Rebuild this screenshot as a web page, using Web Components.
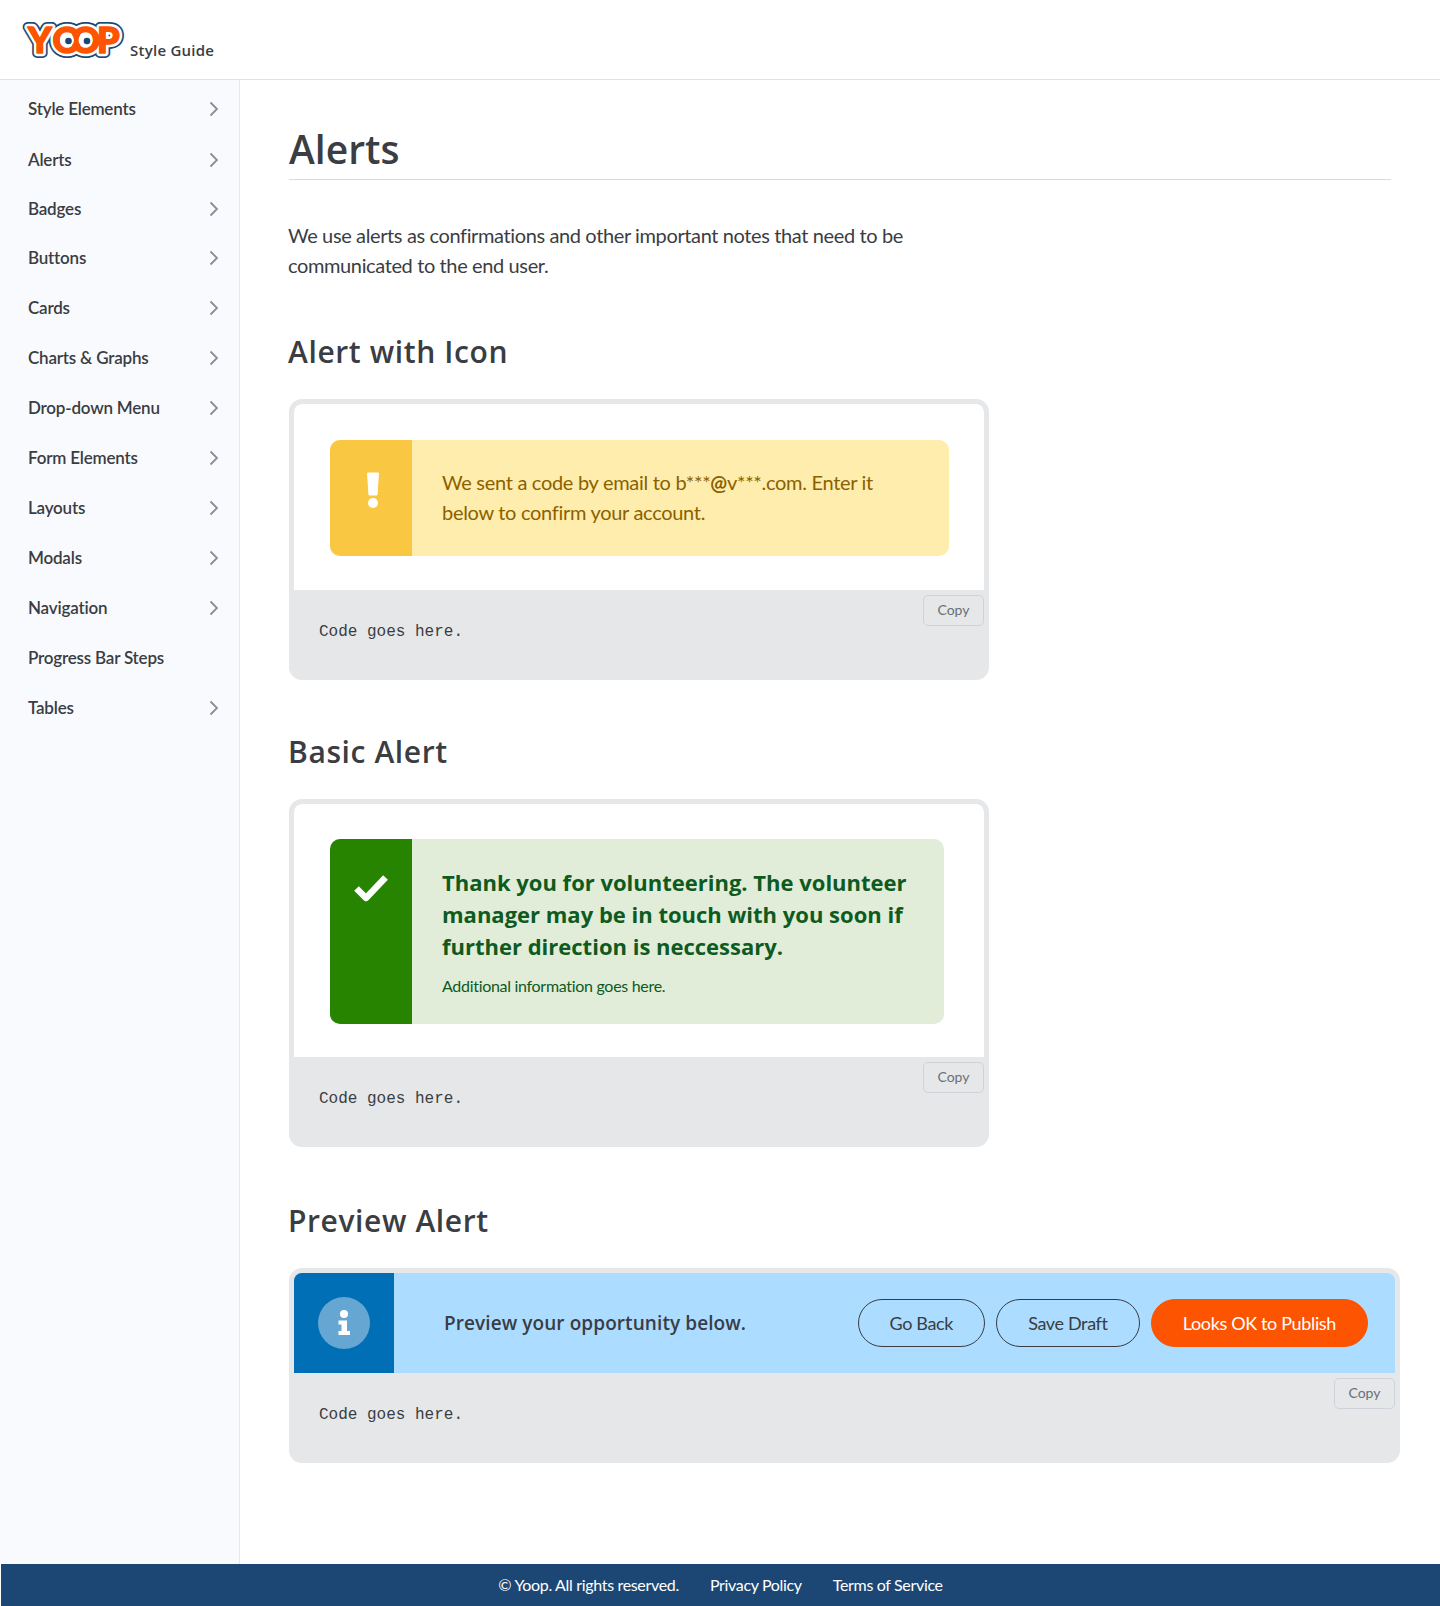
<!DOCTYPE html>
<html lang="en">
<head>
<meta charset="utf-8">
<title>Yoop Style Guide - Alerts</title>
<style>
  html, body { margin: 0; padding: 0; }
  body {
    min-height: 1606px;
    display: flex;
    flex-direction: column;
    background: #fff;
    color: #3a3d42;
    font-family: "Lato", "Liberation Sans", sans-serif;
  }
</style>
</head>
<body>
<yoop-header></yoop-header>
<yoop-shell>
  <side-nav slot="nav">
    <nav-item>Style Elements</nav-item>
    <nav-item gap="51">Alerts</nav-item>
    <nav-item gap="48">Badges</nav-item>
    <nav-item>Buttons</nav-item>
    <nav-item>Cards</nav-item>
    <nav-item>Charts &amp; Graphs</nav-item>
    <nav-item>Drop-down Menu</nav-item>
    <nav-item>Form Elements</nav-item>
    <nav-item>Layouts</nav-item>
    <nav-item>Modals</nav-item>
    <nav-item>Navigation</nav-item>
    <nav-item no-arrow>Progress Bar Steps</nav-item>
    <nav-item>Tables</nav-item>
  </side-nav>
  <page-title>Alerts</page-title>
  <intro-text>We use alerts as confirmations and other important notes that need to be communicated to the end user.</intro-text>

  <section-title first>Alert with Icon</section-title>
  <code-sample>
    <alert-box type="warning">We sent a code by email to b***<b>@</b>v***.com. Enter it below to confirm your account.</alert-box>
  </code-sample>

  <section-title second>Basic Alert</section-title>
  <code-sample tight>
    <alert-box type="success" heading="Thank you for volunteering. The volunteer manager may be in touch with you soon if further direction is neccessary.">Additional information goes here.</alert-box>
  </code-sample>

  <section-title third>Preview Alert</section-title>
  <code-sample wide>
    <preview-alert>
      <pill-button>Go Back</pill-button>
      <pill-button>Save Draft</pill-button>
      <pill-button primary>Looks OK to Publish</pill-button>
    </preview-alert>
  </code-sample>
</yoop-shell>
<yoop-footer></yoop-footer>

<script>
const HEADING_FONT = '"Open Sans", "Noto Sans", sans-serif'

class YoopHeader extends HTMLElement {
  constructor () {
    super()
    this.shadow = this.attachShadow({ mode: 'open' })
  }
  connectedCallback () {
    this.shadow.innerHTML = /*html*/`
    <style>
      :host {
        display: flex;
        align-items: flex-start;
        height: 79px;
        border-bottom: 1px solid #dfe1e5;
        background: #fff;
        box-sizing: content-box;
      }
      svg { display: block; margin: 20px 0 0 24px; overflow: visible; }
      span {
        margin: 40px 0 0 2px;
        font: 600 15px/20px ${HEADING_FONT};
        letter-spacing: 0.25px;
        color: #3a3d42;
      }
      text { font-family: Lato, sans-serif; font-weight: 900; font-size: 36px; stroke-linejoin: round; }
    </style>
    <svg width="104" height="40" viewBox="0 0 104 40" role="img" aria-label="Yoop">
      <text x="4 28.500 47 73" y="33" fill="#1c4775" stroke="#1c4775" stroke-width="10">YOOP</text>
      <text x="4 28.500 47 73" y="33" fill="#fff" stroke="#fff" stroke-width="6.500">YOOP</text>
      <text x="4 28.500 47 73" y="33" fill="#fc5400" stroke="#fc5400" stroke-width="1.500">YOOP</text>
      <circle cx="43" cy="20" r="7" fill="#fff"/>
      <circle cx="44.500" cy="21" r="3.300" fill="#1c4775"/>
      <circle cx="61.500" cy="20" r="7" fill="#fff"/>
      <circle cx="63" cy="21" r="3.300" fill="#1c4775"/>
    </svg>
    <span>Style Guide</span>
    `
  }
}

class YoopShell extends HTMLElement {
  constructor () {
    super()
    this.shadow = this.attachShadow({ mode: 'open' })
  }
  connectedCallback () {
    this.shadow.innerHTML = /*html*/`
    <style>
      :host { display: flex; flex: 1; align-items: stretch; }
      main {
        flex: 1;
        min-width: 0;
        padding: 0 40px 0 48px;
      }
    </style>
    <slot name="nav"></slot>
    <main><slot></slot></main>
    `
  }
}

class SideNav extends HTMLElement {
  constructor () {
    super()
    this.shadow = this.attachShadow({ mode: 'open' })
  }
  connectedCallback () {
    this.shadow.innerHTML = /*html*/`
    <style>
      :host {
        display: block;
        flex: 0 0 240px;
        box-sizing: border-box;
        padding-top: 4px;
        background: #f9fafe;
        border-right: 1px solid #e5e7eb;
      }
    </style>
    <slot></slot>
    `
  }
}

class NavItem extends HTMLElement {
  constructor () {
    super()
    this.shadow = this.attachShadow({ mode: 'open' })
  }
  connectedCallback () {
    const arrow = this.hasAttribute('no-arrow') ? '' : /*html*/`
      <svg width="10" height="16" viewBox="0 0 10 16"><path d="M1.500 1.500 8 8l-6.500 6.500" fill="none" stroke="#8a8d93" stroke-width="1.800"/></svg>`
    this.shadow.innerHTML = /*html*/`
    <style>
      :host {
        display: flex;
        align-items: center;
        justify-content: space-between;
        height: ${this.getAttribute('gap') || 50}px;
        padding: 0 20px 0 28px;
        font: 600 17px/24px "Lato", sans-serif;
        letter-spacing: -0.2px;
        color: #3a3d42;
      }
    </style>
    <span><slot></slot></span>${arrow}
    `
  }
}

class PageTitle extends HTMLElement {
  constructor () {
    super()
    this.shadow = this.attachShadow({ mode: 'open' })
  }
  connectedCallback () {
    this.shadow.innerHTML = /*html*/`
    <style>
      :host {
        display: block;
        margin: 43px 9px 0 1px;
        padding-bottom: 4px;
        border-bottom: 1px solid #d9dbdf;
        font: 600 39px/52px ${HEADING_FONT};
        color: #3a3d42;
      }
    </style>
    <slot></slot>
    `
  }
}

class IntroText extends HTMLElement {
  constructor () {
    super()
    this.shadow = this.attachShadow({ mode: 'open' })
  }
  connectedCallback () {
    this.shadow.innerHTML = /*html*/`
    <style>
      :host {
        display: block;
        width: 640px;
        margin-top: 40px;
        font: 400 20px/30px "Lato", sans-serif;
        letter-spacing: -0.38px;
        color: #3a3d42;
      }
    </style>
    <slot></slot>
    `
  }
}

class SectionTitle extends HTMLElement {
  constructor () {
    super()
    this.shadow = this.attachShadow({ mode: 'open' })
  }
  connectedCallback () {
    const top = this.hasAttribute('first') ? 51 : this.hasAttribute('second') ? 51 : 53
    this.shadow.innerHTML = /*html*/`
    <style>
      :host {
        display: block;
        margin: ${top}px 0 26px;
        font: 600 30px/42px ${HEADING_FONT};
        letter-spacing: 0.6px;
        color: #3a3d42;
      }
    </style>
    <slot></slot>
    `
  }
}

class CodeSample extends HTMLElement {
  constructor () {
    super()
    this.shadow = this.attachShadow({ mode: 'open' })
  }
  connectedCallback () {
    const wide = this.hasAttribute('wide')
    const pad = this.hasAttribute('tight') ? '35px 39px 33px 36px' : '36px 39px 34px 36px'
    this.shadow.innerHTML = /*html*/`
    <style>
      :host {
        display: block;
        box-sizing: border-box;
        width: ${wide ? 1111 : 700}px;
        margin-left: 1px;
        border: 5px solid #e6e7e9;
        border-bottom: 0;
        border-radius: 13px;
        background: #e6e7e9;
        overflow: hidden;
      }
      .demo {
        background: #fff;
        padding: ${wide ? 0 : pad};
        border-radius: 8px 8px 0 0;
      }
      .code {
        position: relative;
        height: 90px;
        box-sizing: border-box;
        padding: 32px 0 0 25px;
        font: 400 16px/20px "Liberation Mono", monospace;
        color: #3a3d42;
      }
      .copy {
        position: absolute;
        top: 5px;
        right: 0;
        width: 61px;
        height: 31px;
        box-sizing: border-box;
        border: 1px solid #cfd2d8;
        border-radius: 5px;
        font: 400 14px/28px "Lato", sans-serif;
        text-align: center;
        color: #6b6f76;
      }
    </style>
    <div class="demo"><slot></slot></div>
    <div class="code">Code goes here.<div class="copy">Copy</div></div>
    `
  }
}

class AlertBox extends HTMLElement {
  constructor () {
    super()
    this.shadow = this.attachShadow({ mode: 'open' })
  }
  connectedCallback () {
    const success = this.getAttribute('type') == 'success'
    const heading = this.getAttribute('heading')
    const icon = success
      ? /*html*/`<svg width="36" height="28" viewBox="0 0 36 28"><path d="M3.500 14.500 13 24 32.500 3.500" fill="none" stroke="#fff" stroke-width="6.500" stroke-linejoin="round"/></svg>`
      : /*html*/`<svg width="14" height="36" viewBox="0 0 14 36" style="margin-left:4px"><path d="M1.500 1h11l-1.500 22h-8z" fill="#fff" stroke="#fff" stroke-linejoin="round"/><circle cx="7" cy="31" r="5" fill="#fff"/></svg>`
    this.shadow.innerHTML = /*html*/`
    <style>
      :host {
        display: flex;
        box-sizing: border-box;
        width: ${success ? 614 : 619}px;
        border-radius: 10px;
        overflow: hidden;
        background: ${success ? '#e1edd9' : '#feedac'};
        color: ${success ? '#0f5a1f' : '#8b6100'};
      }
      .icon {
        flex: 0 0 82px;
        display: flex;
        justify-content: center;
        align-items: flex-start;
        padding-top: ${success ? '35px' : '32px'};
        box-sizing: border-box;
        background: ${success ? '#278400' : '#fac742'};
      }
      .body {
        padding: ${success ? '27px 18px 28px 30px' : '27px 30px 29px'};
        font: 400 20px/30px "Lato", sans-serif;
        letter-spacing: -0.3px;
      }
      h3 {
        margin: 0 0 14px;
        font: 700 22px/32px ${HEADING_FONT};
        letter-spacing: 0;
      }
      .small { font-size: 16px; line-height: 20px; }
    </style>
    <div class="icon">${icon}</div>
    <div class="body">
      ${heading ? `<h3>${heading}</h3>` : ''}
      <div class="${heading ? 'small' : ''}"><slot></slot></div>
    </div>
    `
  }
}

class PreviewAlert extends HTMLElement {
  constructor () {
    super()
    this.shadow = this.attachShadow({ mode: 'open' })
  }
  connectedCallback () {
    this.shadow.innerHTML = /*html*/`
    <style>
      :host {
        display: flex;
        align-items: center;
        height: 100px;
        background: #acdcff;
      }
      .icon {
        flex: 0 0 100px;
        align-self: stretch;
        display: flex;
        align-items: center;
        justify-content: center;
        background: #006fb6;
      }
      p {
        flex: 1;
        margin: 0 0 0 50px;
        font: 600 19px/28px ${HEADING_FONT};
        letter-spacing: 0.08px;
        color: #3a3d42;
      }
      .buttons { display: flex; gap: 11px; margin-right: 27px; }
    </style>
    <div class="icon">
      <svg width="52" height="52" viewBox="0 0 52 52">
        <circle cx="26" cy="26" r="26" fill="#66a6d3"/>
        <circle cx="26" cy="17" r="4" fill="#fff"/>
        <path d="M20.500 23.500h8.500v10.500h3v4h-11.500v-4h3v-6.500h-3z" fill="#fff"/>
      </svg>
    </div>
    <p>Preview your opportunity below.</p>
    <div class="buttons"><slot></slot></div>
    `
  }
}

class PillButton extends HTMLElement {
  constructor () {
    super()
    this.shadow = this.attachShadow({ mode: 'open' })
  }
  connectedCallback () {
    const primary = this.hasAttribute('primary')
    this.shadow.innerHTML = /*html*/`
    <style>
      :host {
        display: block;
        box-sizing: border-box;
        height: 48px;
        padding: 0 31px;
        border: 1px solid ${primary ? '#fc5400' : '#3a3d42'};
        border-radius: 24px;
        background: ${primary ? '#fc5400' : 'transparent'};
        color: ${primary ? '#fff' : '#3a3d42'};
        font: 400 18px/46px "Lato", sans-serif;
        letter-spacing: -0.35px;
        white-space: nowrap;
      }
    </style>
    <slot></slot>
    `
  }
}

class YoopFooter extends HTMLElement {
  constructor () {
    super()
    this.shadow = this.attachShadow({ mode: 'open' })
  }
  connectedCallback () {
    this.shadow.innerHTML = /*html*/`
    <style>
      :host {
        display: flex;
        justify-content: center;
        gap: 31px;
        height: 42px;
        margin-left: 1px;
        background: #1c4775;
        color: #fff;
        font: 400 16px/42px "Lato", sans-serif;
        letter-spacing: -0.33px;
      }
    </style>
    <span>&copy; Yoop. All rights reserved.</span>
    <span>Privacy Policy</span>
    <span>Terms of Service</span>
    `
  }
}

customElements.define('yoop-header', YoopHeader)
customElements.define('yoop-shell', YoopShell)
customElements.define('side-nav', SideNav)
customElements.define('nav-item', NavItem)
customElements.define('page-title', PageTitle)
customElements.define('intro-text', IntroText)
customElements.define('section-title', SectionTitle)
customElements.define('code-sample', CodeSample)
customElements.define('alert-box', AlertBox)
customElements.define('preview-alert', PreviewAlert)
customElements.define('pill-button', PillButton)
customElements.define('yoop-footer', YoopFooter)
</script>
</body>
</html>
